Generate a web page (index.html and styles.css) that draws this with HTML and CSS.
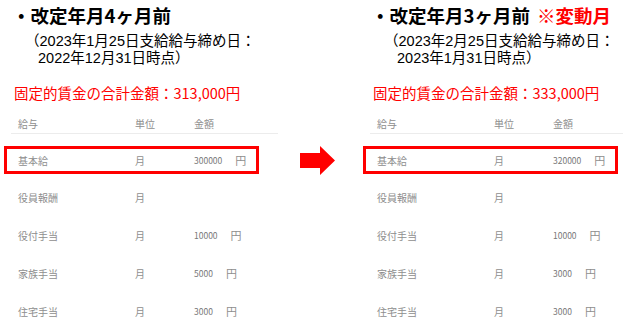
FILE: index.html
```html
<!DOCTYPE html>
<html lang="ja">
<head>
<meta charset="utf-8">
<link rel="stylesheet" href="styles.css">
</head>
<body>
<div class="page">
  <section class="panel panel-left">
    <h1 class="title">・改定年月4ヶ月前</h1>
    <div class="sub">
      <div class="sub-line1">（2023年1月25日支給給与締め日：</div>
      <div class="sub-line2">2022年12月31日時点）</div>
    </div>
    <div class="total">固定的賃金の合計金額：313,000円</div>
    <div class="table">
      <div class="thead"><span>給与</span><span>単位</span><span>金額</span></div>
      <div class="row hl"><span>基本給</span><span>月</span><span class="amt"><span class="num">300000</span><span class="yen">円</span></span></div>
      <div class="row"><span>役員報酬</span><span>月</span><span></span></div>
      <div class="row"><span>役付手当</span><span>月</span><span class="amt"><span class="num">10000</span><span class="yen">円</span></span></div>
      <div class="row"><span>家族手当</span><span>月</span><span class="amt"><span class="num">5000</span><span class="yen">円</span></span></div>
      <div class="row"><span>住宅手当</span><span>月</span><span class="amt"><span class="num">3000</span><span class="yen">円</span></span></div>
    </div>
  </section>
  <div class="arrow-col">
    <svg class="arrow" width="35" height="29" viewBox="0 0 35 29"><polygon points="0,7 20,7 20,0 35,14.5 20,29 20,22 0,22" fill="#ff0000"/></svg>
  </div>
  <section class="panel panel-right">
    <h1 class="title">・改定年月3ヶ月前<span class="flag">※変動月</span></h1>
    <div class="sub">
      <div class="sub-line1">（2023年2月25日支給給与締め日：</div>
      <div class="sub-line2">2023年1月31日時点）</div>
    </div>
    <div class="total">固定的賃金の合計金額：333,000円</div>
    <div class="table">
      <div class="thead"><span>給与</span><span>単位</span><span>金額</span></div>
      <div class="row hl"><span>基本給</span><span>月</span><span class="amt"><span class="num">320000</span><span class="yen">円</span></span></div>
      <div class="row"><span>役員報酬</span><span>月</span><span></span></div>
      <div class="row"><span>役付手当</span><span>月</span><span class="amt"><span class="num">10000</span><span class="yen">円</span></span></div>
      <div class="row"><span>家族手当</span><span>月</span><span class="amt"><span class="num">3000</span><span class="yen">円</span></span></div>
      <div class="row"><span>住宅手当</span><span>月</span><span class="amt"><span class="num">3000</span><span class="yen">円</span></span></div>
    </div>
  </section>
</div>
</body>
</html>
```
FILE: styles.css
```css
html, body {
  margin: 0;
  padding: 0;
  background: #ffffff;
}
body {
  width: 623px;
  height: 330px;
  overflow: hidden;
  font-family: "Noto Sans CJK JP", "Noto Sans", sans-serif;
  color: #000;
}
.page {
  display: flex;
  width: 623px;
  height: 330px;
}
.panel-left {
  width: 300px;
  flex: none;
}
.arrow-col {
  width: 59px;
  flex: none;
  padding-top: 146px;
  box-sizing: border-box;
}
.arrow {
  display: block;
}
.panel-right {
  flex: none;
  width: 264px;
}
.title {
  margin: 4px 0 0 12px;
  font-size: 18.5px;
  font-weight: bold;
  line-height: 23px;
  white-space: nowrap;
}
.flag {
  color: #ff0000;
  margin-left: 7px;
}
.sub {
  margin-top: 6px;
  font-family: "Liberation Sans", "Noto Sans CJK JP", sans-serif;
  font-size: 14.5px;
  line-height: 17px;
  white-space: nowrap;
}
.sub-line1 {
  padding-left: 25px;
}
.sub-line2 {
  padding-left: 38px;
}
.total {
  margin-top: 16px;
  padding-left: 14px;
  font-size: 14.5px;
  line-height: 20px;
  color: #ff0000;
  white-space: nowrap;
}
.table {
  margin-top: 11px;
  font-size: 10px;
  color: #8e8e8e;
}
.thead {
  margin-left: 11px;
  width: 267px;
  height: 20px;
  padding-left: 7px;
  box-sizing: border-box;
  border-bottom: 1px solid #ececec;
  display: grid;
  grid-template-columns: 117px 59px 1fr;
  align-items: center;
}
.row {
  display: grid;
  grid-template-columns: 117px 59px 1fr;
  align-items: center;
  height: 38px;
  padding-left: 18px;
  box-sizing: border-box;
}
.row.hl {
  margin: 12px 0 4px 4px;
  width: 255px;
  height: 28px;
  padding-left: 11px;
  border: 3px solid #ff0000;
}
.amt {
  display: flex;
  align-items: center;
}
.num {
  font-size: 8.5px;
  color: #777;
}
.yen {
  margin-left: 13px;
  font-size: 11px;
  color: #8e8e8e;
}
```
